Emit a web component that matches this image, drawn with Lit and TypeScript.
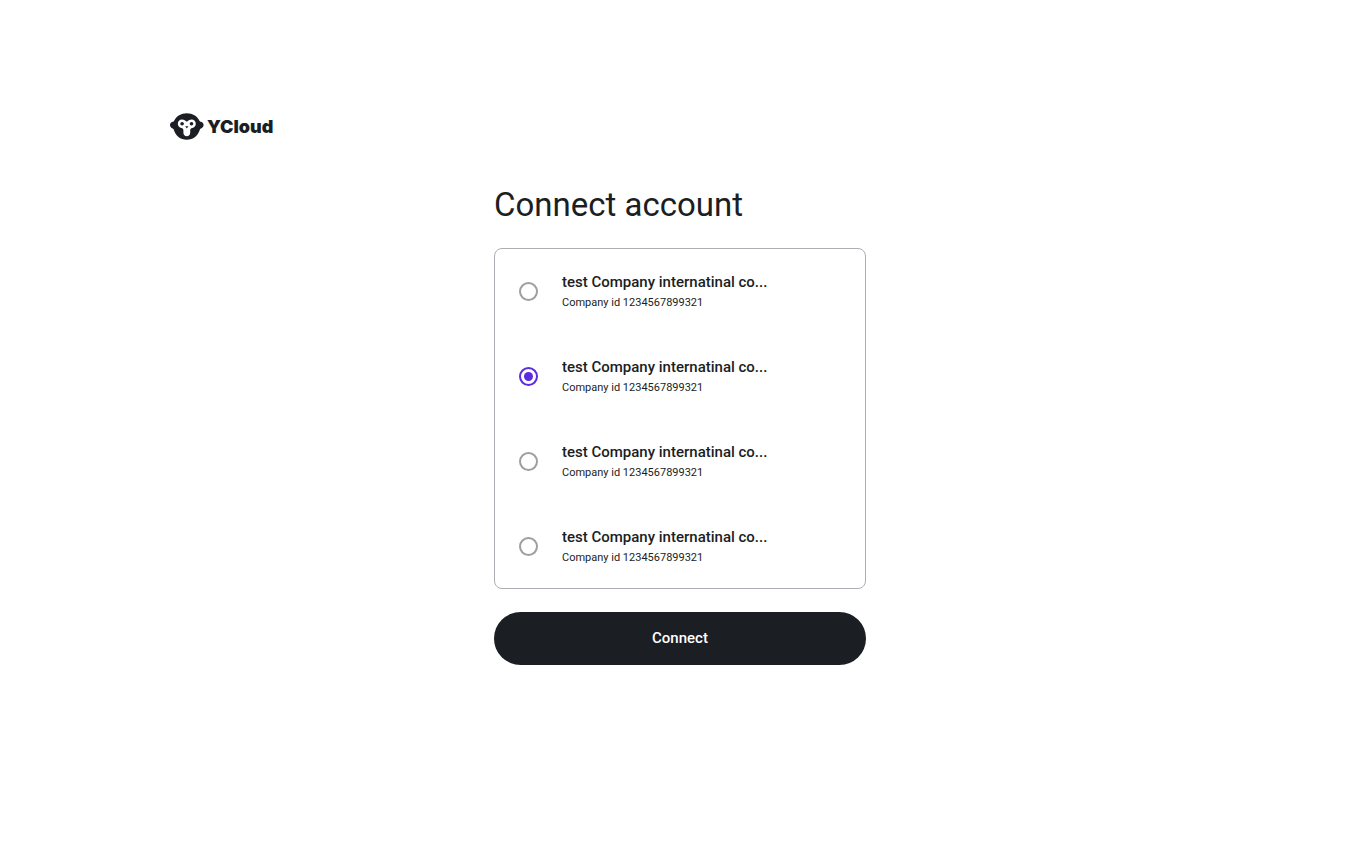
import { LitElement, html, css, svg } from "lit";
import { customElement, property, state } from "lit/decorators.js";

@customElement("brand-logo")
export class BrandLogo extends LitElement {
  static styles = css`
    :host { display: block; }
    .brand {
      display: inline-flex;
      align-items: center;
      gap: 3px;
      color: #1b1e23;
      text-decoration: none;
    }
    .mark { display: block; width: 34px; height: 28px; }
    .word {
      font: 900 18px/28px Inter, sans-serif;
    }
  `;

  render() {
    return html`
      <a class="brand" href="#">
        ${svg`
          <svg class="mark" viewBox="0 0 34 28" aria-hidden="true">
            <path fill="#1b1e23" d="M16.8 .2C22.6 .2 27.2 3.2 29.3 7.4C29.7 8.2 30.2 8.5 31 8.8C32.6 9.3 33.6 10.5 33.6 12.1C33.6 13.7 32.5 15 30.9 15.5C30.3 15.7 30 16.1 29.8 16.8C28.2 22.7 23.2 26.8 16.8 26.8C10.4 26.8 5.4 22.7 3.8 16.8C3.6 16.1 3.3 15.7 2.7 15.5C1.1 15 0 13.7 0 12.1C0 10.5 1 9.3 2.6 8.8C3.4 8.5 3.9 8.2 4.3 7.4C6.4 3.2 11 .2 16.8 .2Z"/>
            <path fill="#fff" d="M12 6.5C14.1 6.5 15.6 7.6 16.8 8.8C18 7.6 19.5 6.5 21.6 6.5C24 6.5 25.8 8.4 25.8 10.7C25.8 12.8 24.3 14.5 22.3 15C21 15.4 20.2 16.1 20.2 17.5V19.8C20.2 21.8 18.7 23.2 16.8 23.2S13.4 21.8 13.4 19.8V17.5C13.4 16.1 12.6 15.4 11.3 15C9.3 14.5 7.8 12.8 7.8 10.7C7.8 8.4 9.6 6.5 12 6.5Z"/>
            <circle cx="12.1" cy="10.7" r="1.8" fill="#1b1e23"/>
            <circle cx="21.5" cy="10.7" r="1.8" fill="#1b1e23"/>
            <path fill="#1b1e23" d="M15.2 13.2H18.4L16.8 15.4Z"/>
          </svg>`}
        <span class="word">YCloud</span>
      </a>
    `;
  }
}

interface Account {
  key: string;
  name: string;
  companyId: string;
}

@customElement("account-list")
export class AccountList extends LitElement {
  @property({ attribute: false }) accounts: Account[] = [];
  @property() selected = "";

  static styles = css`
    :host { display: block; }
    .list {
      display: grid;
      gap: 1px;
      margin: 0;
      padding: 0;
      border: 1px solid #adaeb3;
      border-radius: 8px;
    }
    .row {
      display: flex;
      align-items: center;
      gap: 24px;
      padding: 21px 24px;
      cursor: pointer;
    }
    .radio {
      appearance: none;
      flex: none;
      display: grid;
      place-items: center;
      box-sizing: border-box;
      width: 19px;
      height: 19px;
      margin: 0;
      border: 2px solid #9e9ea3;
      border-radius: 50%;
      cursor: pointer;
    }
    .radio:checked { border-color: #5b2be0; }
    .radio:checked::before {
      content: "";
      width: 9px;
      height: 9px;
      border-radius: 50%;
      background: #5b2be0;
    }
    .text { min-width: 0; color: #1b1e23; }
    .name { display: block; font: 500 15px/24px Roboto, sans-serif; }
    .id { display: block; font: 400 11px/18px Roboto, sans-serif; }
  `;

  private pick(key: string) {
    this.dispatchEvent(new CustomEvent("pick", { detail: key }));
  }

  render() {
    return html`
      <fieldset class="list" aria-label="Accounts">
        ${this.accounts.map(
          (a) => html`
            <label class="row" for=${a.key}>
              <input
                class="radio"
                type="radio"
                name="account"
                id=${a.key}
                .checked=${a.key === this.selected}
                @change=${() => this.pick(a.key)}
              />
              <span class="text">
                <span class="name">${a.name}</span>
                <span class="id">Company id ${a.companyId}</span>
              </span>
            </label>
          `
        )}
      </fieldset>
    `;
  }
}

@customElement("app-root")
export class AppRoot extends LitElement {
  @state() private selected = "account-2";

  private accounts: Account[] = [1, 2, 3, 4].map((n) => ({
    key: `account-${n}`,
    name: "test Company internatinal co...",
    companyId: "1234567899321",
  }));

  static styles = css`
    :host {
      display: block;
      box-sizing: border-box;
      min-height: 100vh;
      padding: 113px 12.5%;
      background: #fff;
      color: #1b1e23;
      font-family: Roboto, sans-serif;
    }
    .content {
      width: 100%;
      max-width: 372px;
      margin: 40px auto 0;
    }
    .title { margin: 0 0 23px; font-size: 33px; line-height: 40px; font-weight: 400; }
    .connect {
      display: block;
      width: 100%;
      margin-top: 23px;
      padding: 14px 24px;
      border: 0;
      border-radius: 27px;
      background: #1b1e23;
      color: #fff;
      font: 500 15px/25px Roboto, sans-serif;
      cursor: pointer;
    }
  `;

  render() {
    return html`
      <header><brand-logo></brand-logo></header>
      <main class="content">
        <h1 class="title">Connect account</h1>
        <account-list
          .accounts=${this.accounts}
          .selected=${this.selected}
          @pick=${(e: CustomEvent<string>) => (this.selected = e.detail)}
        ></account-list>
        <button class="connect" type="button">Connect</button>
      </main>
    `;
  }
}
